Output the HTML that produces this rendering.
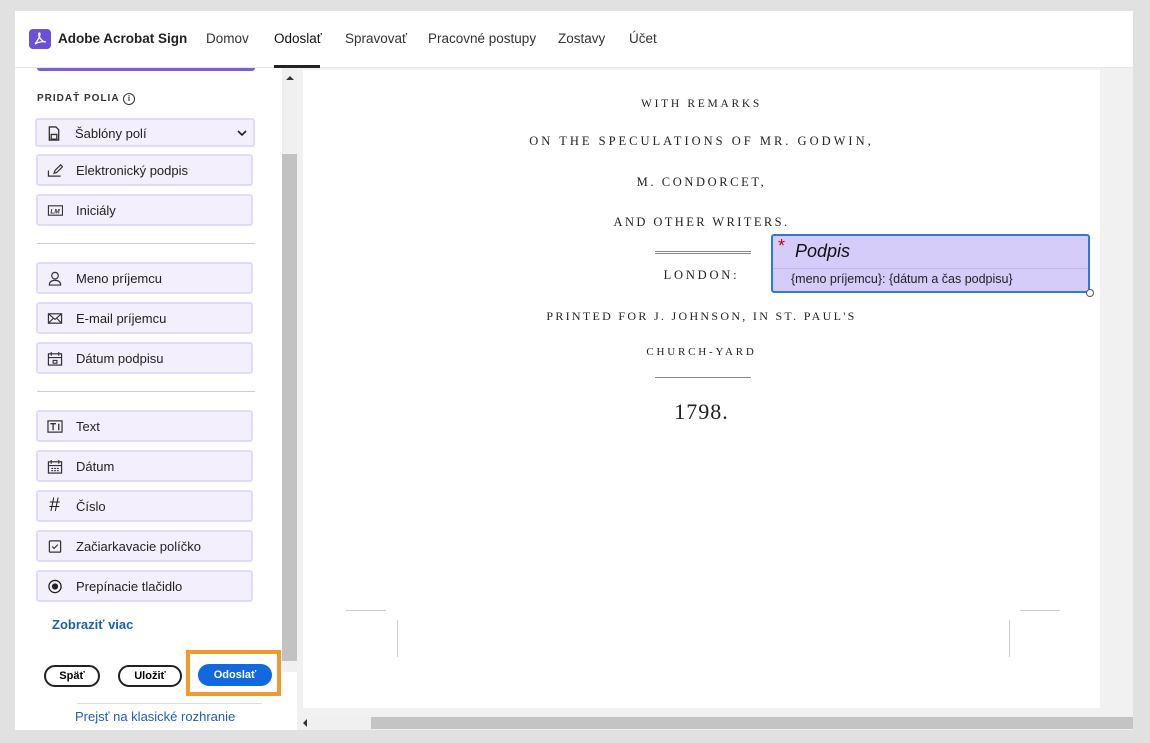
<!DOCTYPE html>
<html><head><meta charset="utf-8"><style>
*{box-sizing:border-box;margin:0;padding:0}
body{width:1150px;height:743px;background:#e1e1e1;font-family:"Liberation Sans",sans-serif;position:relative;overflow:hidden}
.frame{position:absolute;left:15px;top:11px;width:1118px;height:719px;background:#fff}
.hdr{position:absolute;left:0;top:0;width:1118px;height:57px;border-bottom:1px solid #e6e6e6}
.logo{position:absolute;left:14px;top:18px;width:22px;height:20px;background:#6b4fd8;border-radius:4px}
.brand{position:absolute;left:43px;top:20px;font-weight:bold;font-size:13.5px;color:#222}
.nav{position:absolute;top:20px;font-size:13.5px;color:#333}
.ul{position:absolute;left:259px;top:54px;width:46px;height:3px;background:#222}
.side{position:absolute;left:0;top:46px;width:267px;height:662px}
.btn{position:absolute;left:21px;width:217px;height:32px;background:#f3effd;border:2px solid #e2dbf5;border-radius:3px;font-size:13px;color:#222}
.btn span{position:absolute;left:38px;top:7px}
.ic{position:absolute;left:9px;top:7px;width:16px;height:15px}
.sep{position:absolute;left:22px;width:218px;height:1px;background:#ccc}
.sb{position:absolute;left:267px;top:57px;width:15px;height:604px;background:#f0f0f0}
.doc{position:absolute;left:282px;top:57px;width:836px;height:648px;background:#f1f1f1}
.page{position:absolute;left:6px;top:2px;width:797px;height:638px;background:#fff}
.sc{position:absolute;width:100%;text-align:center;font-family:"Liberation Serif",serif;text-transform:uppercase;letter-spacing:3px;color:#222;font-size:12.5px;left:0}
.pill{position:absolute;top:608px;height:22px;border:2px solid #222;border-radius:12px;font-size:11px;font-weight:bold;text-align:center;line-height:18px}
</style></head><body>
<div class="frame">
<div class="hdr">
<div class="logo"><svg width="22" height="20" viewBox="0 0 22 20"><path d="M6 15 C9 11 11 7 11 5 C11 3 9 4 10 7 C11 10 14 13 17 13 C14 12 9 13 6 15Z" fill="none" stroke="#fff" stroke-width="1.3"/></svg></div>
<div class="brand">Adobe Acrobat Sign</div>
<div class="nav" style="left:191px">Domov</div>
<div class="nav" style="left:259px;color:#111">Odoslať</div>
<div class="nav" style="left:330px">Spravovať</div>
<div class="nav" style="left:413px">Pracovné postupy</div>
<div class="nav" style="left:543px">Zostavy</div>
<div class="nav" style="left:614px">Účet</div>
<div class="ul"></div>
</div>
<div class="side">
<div style="position:absolute;left:22px;top:11px;width:218px;height:3px;background:#7b5ce0;border-radius:0 0 3px 3px"></div>
<div style="position:absolute;left:22px;top:36px;font-size:10px;font-weight:bold;letter-spacing:1px;color:#333">PRIDAŤ POLIA <span style="display:inline-block;width:12px;height:12px;border:1px solid #333;border-radius:50%;font-size:8px;text-align:center;line-height:10px;letter-spacing:0">i</span></div>
<div class="btn" style="top:61px;left:20px;width:220px;height:29px"><svg class="ic" style="top:6px" viewBox="0 0 16 16"><path d="M3 1h7l3 3v11H3z M5 9h6v5H5z" fill="none" stroke="#333" stroke-width="1.4"/></svg><span style="top:6px">Šablóny polí</span><svg style="position:absolute;right:6px;top:10px" width="10" height="7" viewBox="0 0 10 7"><path d="M1 1l4 4 4-4" fill="none" stroke="#222" stroke-width="1.6"/></svg></div>
<div class="btn" style="top:97px"><svg class="ic" viewBox="0 0 16 16"><path d="M1 8v6h13 M7 11l1-3 6-6 2 2-6 6z" fill="none" stroke="#333" stroke-width="1.3"/></svg><span>Elektronický podpis</span></div>
<div class="btn" style="top:137px"><svg class="ic" viewBox="0 0 16 16"><rect x="1" y="3" width="15" height="10" fill="none" stroke="#333" stroke-width="1.2"/><text x="3" y="11" font-size="7" font-style="italic" font-weight="bold" fill="#333">LM</text></svg><span>Iniciály</span></div>
<div class="sep" style="top:186px"></div>
<div class="btn" style="top:205px"><svg class="ic" viewBox="0 0 16 16"><circle cx="8" cy="5" r="3.5" fill="none" stroke="#333" stroke-width="1.3"/><path d="M2 15c0-4 3-5 6-5s6 1 6 5z" fill="none" stroke="#333" stroke-width="1.3"/></svg><span>Meno príjemcu</span></div>
<div class="btn" style="top:245px"><svg class="ic" viewBox="0 0 16 16"><rect x="1" y="3" width="14" height="10" fill="none" stroke="#333" stroke-width="1.3"/><path d="M1 3l7 6 7-6 M1 13l5-5 M15 13l-5-5" fill="none" stroke="#333" stroke-width="1.2"/></svg><span>E-mail príjemcu</span></div>
<div class="btn" style="top:285px"><svg class="ic" viewBox="0 0 16 16"><rect x="1" y="3" width="14" height="12" fill="none" stroke="#333" stroke-width="1.3"/><path d="M4 1v4 M12 1v4 M1 7h14 M6 10h4v3H6z" fill="none" stroke="#333" stroke-width="1.2"/></svg><span>Dátum podpisu</span></div>
<div class="sep" style="top:334px"></div>
<div class="btn" style="top:353px"><svg class="ic" viewBox="0 0 16 16"><rect x="0.5" y="2" width="15" height="12" fill="none" stroke="#333" stroke-width="1.3"/><path d="M3 5h6 M6 5v7 M12 5v7" stroke="#333" stroke-width="1.4"/></svg><span>Text</span></div>
<div class="btn" style="top:393px"><svg class="ic" viewBox="0 0 16 16"><rect x="1" y="3" width="14" height="12" fill="none" stroke="#333" stroke-width="1.3"/><path d="M4 1v4 M12 1v4 M1 7h14 M4 10h2 M7 10h2 M10 10h2 M4 12.5h2 M7 12.5h2 M10 12.5h2" stroke="#333" stroke-width="1.2"/></svg><span>Dátum</span></div>
<div class="btn" style="top:433px"><span style="left:11px;top:3px;font-size:19px;font-style:italic">#</span><span>Číslo</span></div>
<div class="btn" style="top:473px"><svg class="ic" viewBox="0 0 16 16"><rect x="2" y="2" width="12" height="12" rx="1" fill="none" stroke="#333" stroke-width="1.3"/><path d="M5 8l2 2 4-4" fill="none" stroke="#333" stroke-width="1.3"/></svg><span>Začiarkavacie políčko</span></div>
<div class="btn" style="top:513px"><svg class="ic" viewBox="0 0 16 16"><circle cx="8" cy="8" r="6.5" fill="none" stroke="#222" stroke-width="1.4"/><circle cx="8" cy="8" r="3.3" fill="#222"/></svg><span>Prepínacie tlačidlo</span></div>
<div style="position:absolute;left:37px;top:560px;font-size:13px;font-weight:bold;color:#1f5fb0">Zobraziť viac</div>
<div class="pill" style="left:29px;width:56px">Späť</div>
<div class="pill" style="left:103px;width:64px">Uložiť</div>
<div style="position:absolute;left:171px;top:593px;width:95px;height:46px;border:4px solid #f39a2e"></div>
<div style="position:absolute;left:183px;top:607px;width:74px;height:22px;background:#1269dd;border-radius:12px;color:#fff;font-size:11px;font-weight:bold;text-align:center;line-height:22px">Odoslať</div>
<div style="position:absolute;left:62px;top:646px;width:185px;height:1px;background:#ddd"></div>
<div style="position:absolute;left:60px;top:652px;font-size:13px;color:#1f5fb0">Prejsť na klasické rozhranie</div>
</div>
<div class="sb"><div style="position:absolute;left:0;top:86px;width:15px;height:507px;background:#c2c2c2"></div><div style="position:absolute;left:4px;top:8px;border:4px solid transparent;border-bottom:4px solid #333;border-top:0"></div></div>
<div class="doc">
<div class="page">
<div class="sc" style="top:28px;font-size:11.5px;letter-spacing:2.7px">with remarks</div>
<div class="sc" style="top:64px">on the speculations of mr. godwin,</div>
<div class="sc" style="top:105px;letter-spacing:2.6px">m. condorcet,</div>
<div class="sc" style="top:145px;letter-spacing:2.4px">and other writers.</div>
<div style="position:absolute;left:352px;top:181px;width:96px;height:3px;border-top:1px solid #888;border-bottom:1px solid #888"></div>
<div class="sc" style="top:198px;letter-spacing:2.8px">london:</div>
<div class="sc" style="top:239px;font-size:12px;letter-spacing:2.3px">printed for j. johnson, in st. paul's</div>
<div class="sc" style="top:276px;font-size:11px;letter-spacing:2.8px">church-yard</div>
<div style="position:absolute;left:352px;top:307px;width:96px;height:1px;background:#888"></div>
<div class="sc" style="top:329px;font-size:22px;letter-spacing:1px">1798.</div>
<div style="position:absolute;left:43px;top:540px;width:40px;height:1px;background:#ccc"></div>
<div style="position:absolute;left:94px;top:550px;width:1px;height:37px;background:#ccc"></div>
<div style="position:absolute;left:717px;top:540px;width:40px;height:1px;background:#ccc"></div>
<div style="position:absolute;left:706px;top:550px;width:1px;height:37px;background:#ccc"></div>
</div>
<div style="position:absolute;left:474px;top:166px;width:319px;height:59px;background:#d6ccfa;border:2px solid #2f7ad8;border-radius:3px">
<span style="position:absolute;left:5px;top:0;color:#c00;font-size:18px">*</span>
<span style="position:absolute;left:22px;top:5px;font-size:18px;font-style:italic;color:#111">Podpis</span>
<div style="position:absolute;left:0;top:32px;width:315px;height:1px;background:#c4b8ee"></div>
<span style="position:absolute;left:18px;top:36px;font-size:12.5px;color:#222">{meno príjemcu}: {dátum a čas podpisu}</span>
<div style="position:absolute;right:-6px;bottom:-6px;width:8px;height:8px;border:1px solid #555;border-radius:50%;background:#fff"></div>
</div>
</div>
<div style="position:absolute;left:282px;top:705px;width:836px;height:14px;background:#f0f0f0"><div style="position:absolute;left:74px;top:1px;width:762px;height:12px;background:#c4c4c4"></div><div style="position:absolute;left:6px;top:3px;border:4px solid transparent;border-right:4px solid #333;border-left:0"></div></div>
</div>
</body></html>
